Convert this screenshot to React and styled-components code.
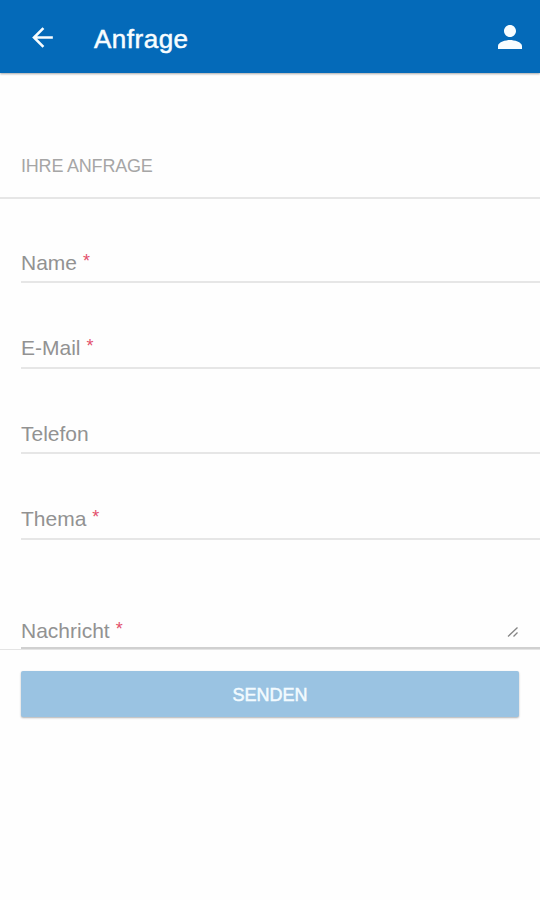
import React from "react";
import styled, { createGlobalStyle } from "styled-components";

const GlobalStyle = createGlobalStyle`
  * {
    box-sizing: border-box;
  }
  body {
    margin: 0;
    background-color: #fefefe;
    font-family: "Liberation Sans", Arial, sans-serif;
  }
`;

const Page = styled.div`
  height: 900px;
  overflow: hidden;
`;

const Toolbar = styled.header`
  display: flex;
  align-items: center;
  height: 73px;
  padding: 1px 12px 0 27px;
  color: #f8fdff;
  background-color: #046ab9;
  box-shadow: 0 1px 2px rgba(0, 0, 0, 0.35);
`;

const Title = styled.h1`
  flex: 1;
  margin: 3px 0 0 36px;
  font-size: 26px;
  font-weight: 400;
  line-height: 30px;
  letter-spacing: 0.5px;
  -webkit-text-stroke: 0.5px #f8fdff;
`;

const Icon = styled.svg`
  display: block;
  width: ${(props) => props.$size}px;
  height: ${(props) => props.$size}px;
  fill: currentColor;
`;

const ListHeader = styled.h2`
  height: 126px;
  margin: 0;
  padding: 82px 21px 0;
  border-bottom: 2px solid #e6e6e6;
  color: #a6a6a6;
  font-size: 18px;
  font-weight: 400;
  line-height: 22px;
  letter-spacing: -0.2px;
`;

const Field = styled.label`
  display: flex;
  align-items: flex-end;
  justify-content: space-between;
  height: ${(props) => props.$height}px;
  margin-left: 21px;
  padding: 0 21px ${(props) => props.$gap}px 0;
  border-bottom: 2px solid ${(props) => (props.$strong ? "#d0d0d0" : "#e6e6e6")};
  color: #929292;
  font-size: 21px;
  line-height: 24px;
`;

const Required = styled.span`
  margin-left: 6px;
  color: #e3506c;
  font-size: 18px;
  line-height: 0;
  vertical-align: 3px;
`;

const Grip = styled.svg`
  width: 12px;
  height: 12px;
  margin-bottom: 5px;
  fill: none;
  stroke: #858585;
  stroke-width: 1.3;
`;

const Footer = styled.div`
  padding: 21px 21px 0;
  border-top: 1px solid #e4e4e4;
`;

const SendButton = styled.button`
  display: block;
  width: 100%;
  height: 46px;
  padding: 2px 0 0;
  border: none;
  border-radius: 2px;
  color: #f3fbff;
  background-color: #9ac3e2;
  box-shadow: 0 1px 2px rgba(0, 0, 0, 0.3);
  font-family: inherit;
  font-size: 18px;
  -webkit-text-stroke: 0.5px #f3fbff;
`;

const fields = [
  { label: "Name", required: true, height: 84, gap: 6 },
  { label: "E-Mail", required: true, height: 86, gap: 7 },
  { label: "Telefon", required: false, height: 85, gap: 6 },
  { label: "Thema", required: true, height: 86, gap: 7 },
  { label: "Nachricht", required: true, height: 109, gap: 4, multiline: true },
];

const App = () => {
  return (
    <>
      <GlobalStyle />
      <Page>
        <Toolbar>
          <Icon $size={31} viewBox="0 0 24 24">
            <path d="M20 11H7.83l5.59-5.59L12 4l-8 8 8 8 1.41-1.41L7.83 13H20v-2z" />
          </Icon>
          <Title>Anfrage</Title>
          <Icon $size={36} viewBox="0 0 24 24">
            <path d="M12 12c2.21 0 4-1.79 4-4s-1.79-4-4-4-4 1.79-4 4 1.79 4 4 4zm0 2c-2.67 0-8 1.34-8 4v2h16v-2c0-2.66-5.33-4-8-4z" />
          </Icon>
        </Toolbar>
        <ListHeader>IHRE ANFRAGE</ListHeader>
        {fields.map((field) => (
          <Field
            key={field.label}
            $height={field.height}
            $gap={field.gap}
            $strong={field.multiline}
          >
            <span>
              {field.label}
              {field.required && <Required>*</Required>}
            </span>
            {field.multiline && (
              <Grip viewBox="0 0 12 12">
                <path d="M1 10.5 10.5 1.5M6.5 10.5 10.5 6.5" />
              </Grip>
            )}
          </Field>
        ))}
        <Footer>
          <SendButton>SENDEN</SendButton>
        </Footer>
      </Page>
    </>
  );
};

export default App;
